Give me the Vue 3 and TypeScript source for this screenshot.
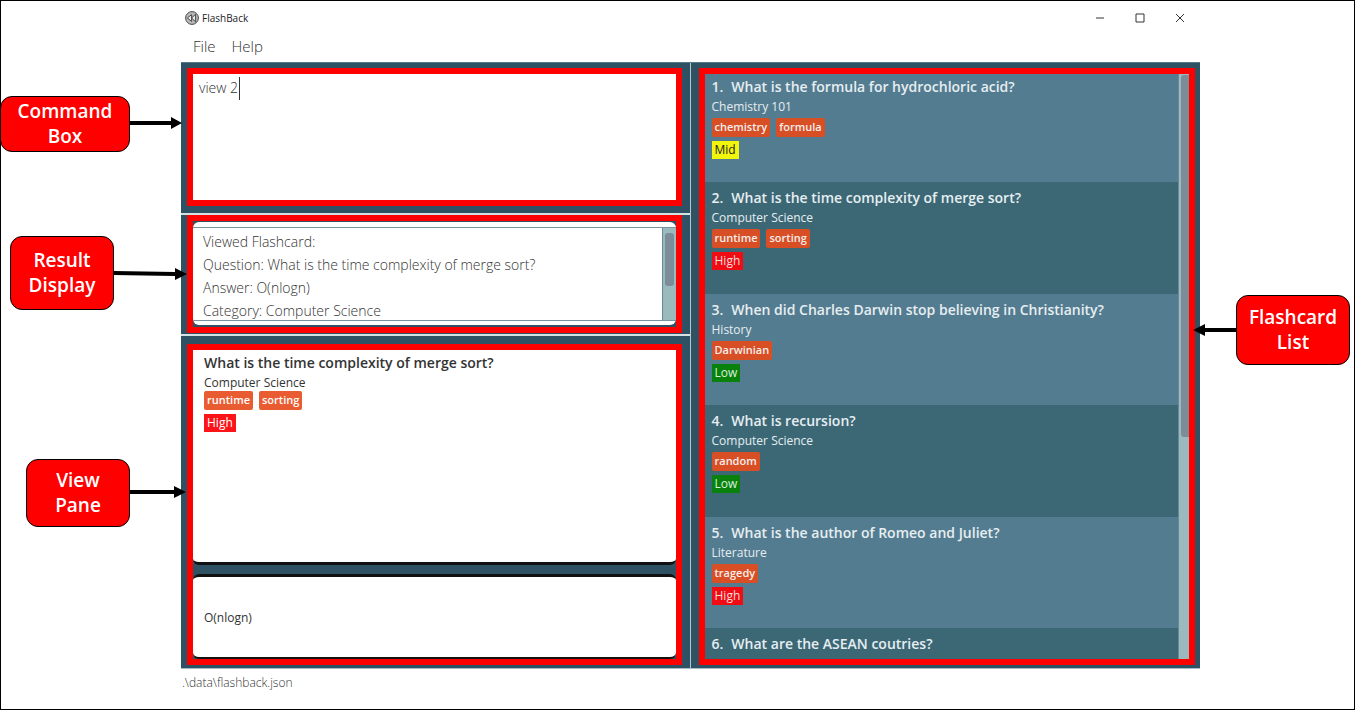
<script setup lang="ts">
import { ref } from 'vue'

type Priority = 'Low' | 'Mid' | 'High'

interface Flashcard {
  id: number
  question: string
  category: string
  tags: string[]
  priority?: Priority
}

const command = ref('view 2')

const result = [
  'Viewed Flashcard:',
  'Question: What is the time complexity of merge sort?',
  'Answer: O(nlogn)',
  'Category: Computer Science',
].join('\n')

const cards: Flashcard[] = [
  { id: 1, question: 'What is the formula for hydrochloric acid?', category: 'Chemistry 101', tags: ['chemistry', 'formula'], priority: 'Mid' },
  { id: 2, question: 'What is the time complexity of merge sort?', category: 'Computer Science', tags: ['runtime', 'sorting'], priority: 'High' },
  { id: 3, question: 'When did Charles Darwin stop believing in Christianity?', category: 'History', tags: ['Darwinian'], priority: 'Low' },
  { id: 4, question: 'What is recursion?', category: 'Computer Science', tags: ['random'], priority: 'Low' },
  { id: 5, question: 'What is the author of Romeo and Juliet?', category: 'Literature', tags: ['tragedy'], priority: 'High' },
  { id: 6, question: 'What are the ASEAN coutries?', category: '', tags: [] },
]

const viewed = cards[1]
</script>

<template>
  <div class="page">
    <main class="window">
      <header class="titlebar">
        <svg class="logo" viewBox="0 0 14 14" aria-hidden="true">
          <circle cx="7" cy="7" r="6.4" fill="#b9b9b9" stroke="#4a4a4a" stroke-width="1" />
          <path d="M6.6 3.6v6.8L2.4 7z M10.6 3.2v7.6L6.6 7z" fill="#e9e9e9" stroke="#3c3c3c" stroke-width="0.9" stroke-linejoin="round" />
        </svg>
        <h1>FlashBack</h1>
        <div class="controls">
          <button type="button" aria-label="Minimize">
            <svg viewBox="0 0 10 10"><path d="M1 5h8" /></svg>
          </button>
          <button type="button" aria-label="Maximize">
            <svg viewBox="0 0 10 10"><path d="M1 1h8v8H1z" /></svg>
          </button>
          <button type="button" aria-label="Close">
            <svg viewBox="0 0 10 10"><path d="M1 1l8 8M9 1l-8 8" /></svg>
          </button>
        </div>
      </header>

      <nav class="menu">
        <button type="button">File</button>
        <button type="button">Help</button>
      </nav>

      <div class="body">
        <div class="left">
          <section class="pane command-pane">
            <div class="frame command-frame">
              <textarea v-model="command" class="command" aria-label="Command box" spellcheck="false"></textarea>
              <span class="caret"></span>
            </div>
          </section>

          <section class="pane result-pane">
            <div class="frame result-frame">
              <div class="result-box">
                <textarea class="result" readonly rows="4" aria-label="Result display" :value="result"></textarea>
                <div class="track result-track"><div class="thumb result-thumb"></div></div>
              </div>
            </div>
          </section>

          <section class="pane view-pane">
            <div class="frame view-frame">
              <article class="question-box">
                <h2 class="question">{{ viewed.question }}</h2>
                <p class="category">{{ viewed.category }}</p>
                <div class="tags">
                  <span v-for="tag in viewed.tags" :key="tag" class="tag">{{ tag }}</span>
                </div>
                <span class="priority high">{{ viewed.priority }}</span>
              </article>
              <div class="answer-box">O(nlogn)</div>
            </div>
          </section>
        </div>

        <section class="right">
          <div class="frame list-frame">
            <ol class="list">
              <li v-for="card in cards" :key="card.id" class="card">
                <h2 class="question"><span class="number">{{ card.id }}.</span>{{ card.question }}</h2>
                <p class="category">{{ card.category }}</p>
                <div class="tags">
                  <span v-for="tag in card.tags" :key="tag" class="tag">{{ tag }}</span>
                </div>
                <span v-if="card.priority" class="priority" :class="card.priority.toLowerCase()">{{ card.priority }}</span>
              </li>
            </ol>
            <div class="track list-track"><div class="thumb list-thumb"></div></div>
          </div>
        </section>
      </div>

      <footer class="status">.\data\flashback.json</footer>
    </main>

    <div class="callout command-callout">Command<br />Box</div>
    <svg class="arrow command-arrow" viewBox="0 0 52 12" aria-hidden="true"><path d="M0 4h41V0l11 6-11 6V8H0z" /></svg>
    <div class="callout result-callout">Result<br />Display</div>
    <svg class="arrow result-arrow" viewBox="0 0 73 12" aria-hidden="true"><path d="M0 3l61 1V0l12 6-12 6V8L0 7z" /></svg>
    <div class="callout view-callout">View<br />Pane</div>
    <svg class="arrow view-arrow" viewBox="0 0 56 12" aria-hidden="true"><path d="M0 4h44V0l12 6-12 6V8H0z" /></svg>
    <div class="callout list-callout">Flashcard<br />List</div>
    <svg class="arrow list-arrow" viewBox="0 0 44 12" aria-hidden="true"><path d="M44 4H12V0L0 6l12 6V8h32z" /></svg>
  </div>
</template>

<style>
body {
  margin: 0;
}
</style>

<style scoped>
* {
  box-sizing: border-box;
}

.page {
  position: relative;
  height: 100vh;
  min-height: 480px;
  padding: 0 154px 0 180px;
  border: 1px solid #000;
  overflow: hidden;
  background: #fff;
  color: #333;
  font-family: "Open Sans", "Noto Sans", sans-serif;
  font-size: 12px;
}

h1,
h2,
p,
ol {
  margin: 0;
  padding: 0;
  font-weight: 400;
}

button,
textarea {
  margin: 0;
  border: 0;
  padding: 0;
  background: none;
  color: inherit;
  font: inherit;
}

.window {
  display: flex;
  flex-direction: column;
  height: 100%;
}

.titlebar {
  display: flex;
  align-items: center;
  gap: 3px;
  height: 33px;
  padding: 0 14px 0 4px;
}

.logo {
  width: 14px;
  height: 14px;
}

.titlebar h1 {
  font-size: 10px;
  color: #222;
}

.controls {
  display: flex;
  gap: 28px;
  margin-left: auto;
}

.controls button {
  display: flex;
  width: 12px;
  height: 12px;
  align-items: center;
  justify-content: center;
}

.controls svg {
  width: 10px;
  height: 10px;
  fill: none;
  stroke: #333;
  stroke-width: 1;
}

.menu {
  display: flex;
  gap: 16px;
  height: 28px;
  padding: 0 12px 5px;
  font-size: 15px;
  font-weight: 300;
}

.body {
  display: grid;
  grid-template-columns: minmax(0, 1fr) minmax(0, 1fr);
  grid-template-rows: minmax(0, 1fr);
  flex: 1;
  min-height: 0;
  border-top: 1px solid #587988;
  border-bottom: 1px solid #a9bac2;
  background: #2f5164;
}

.left {
  display: flex;
  flex-direction: column;
  border-right: 1px solid #b8c9ce;
}

.right {
  padding: 5px 5px 3px 8px;
}

.pane {
  padding: 0 8px 0 6px;
}

.frame {
  height: 100%;
  border: 6px solid #f00;
}

.command-pane {
  height: 152px;
  padding-top: 5px;
  padding-bottom: 7px;
  border-bottom: 2px solid #d5e2e4;
}

.command-frame {
  position: relative;
  background: #fff;
}

.command {
  display: block;
  width: 100%;
  height: 100%;
  padding: 4px 6px;
  outline: 0;
  resize: none;
  font-size: 14px;
  font-weight: 300;
  line-height: 20px;
}

.caret {
  position: absolute;
  top: 3px;
  left: 46px;
  width: 1px;
  height: 23px;
  background: #333;
}

.result-pane {
  height: 121px;
  padding-bottom: 1px;
  border-bottom: 2px solid #d5e2e4;
}

.result-frame {
  padding: 1px 0 2px;
  background: #2f5164;
}

.result-box {
  display: flex;
  height: 100%;
  border: solid #fff;
  border-width: 5px 0 4px;
  border-radius: 6px;
  background: #fff;
}

.result {
  flex: 1;
  min-width: 0;
  padding: 2px 10px 0;
  border: solid #7994a1;
  border-width: 1px 0;
  overflow: hidden;
  outline: 0;
  resize: none;
  white-space: pre;
  font-size: 14px;
  font-weight: 300;
  line-height: 23px;
}

.track {
  background: #9bbabd;
  border-left: 1px solid #668b97;
}

.thumb {
  border-radius: 3px;
  background: #7c8d99;
}

.result-track {
  width: 14px;
  padding: 5px 2px;
  border-top: 1px solid #7994a1;
  border-bottom: 1px solid #7994a1;
}

.result-thumb {
  height: 53px;
}

.view-pane {
  flex: 1;
  min-height: 0;
  padding-top: 8px;
  padding-bottom: 3px;
}

.view-frame {
  display: flex;
  flex-direction: column;
  gap: 9px;
}

.question-box {
  flex: 1;
  min-height: 0;
  padding: 3px 11px;
  border-bottom: 3px solid #111;
  border-radius: 0 0 6px 6px;
  background: #fff;
}

.answer-box {
  display: flex;
  height: 85px;
  align-items: center;
  padding: 0 11px;
  border-top: 3px solid #111;
  border-bottom: 2px solid #111;
  border-radius: 6px;
  background: #fff;
}

.question {
  font-size: 14px;
  font-weight: 600;
  line-height: 20px;
  white-space: nowrap;
}

.number {
  margin-right: 8px;
}

.category {
  height: 18px;
  font-size: 12px;
  line-height: 20px;
}

.tags {
  display: flex;
  gap: 6px;
  height: 19px;
  margin-bottom: 4px;
}

.tag {
  padding: 0 3px;
  border-radius: 2px;
  background: #e95b30;
  color: #fff;
  font-size: 11px;
  font-weight: 600;
  line-height: 18px;
}

.priority {
  display: inline-block;
  height: 18px;
  padding: 0 3px;
  font-size: 12px;
  line-height: 18px;
  vertical-align: top;
}

.high {
  background: #fc1419;
  color: #fff;
}

.list-frame {
  display: flex;
  overflow: hidden;
}

.list {
  flex: 1;
  min-width: 0;
  margin-top: -3px;
  list-style: none;
}

.card {
  height: 111px;
  padding: 6px 7px;
  background: #547c90;
  color: #e6eef1;
}

.card:nth-child(even) {
  height: 112px;
  background: #3c6876;
}

.card .category {
  height: 21px;
}

.card .tag {
  background: #d84f26;
  color: #f5eeeb;
}

.card .high {
  background: #f00c12;
  color: #f5dcdc;
}

.card .mid {
  background: #f2f50c;
  color: #222;
}

.card .low {
  background: #08820c;
  color: #dcefdc;
}

.list-track {
  width: 11px;
  padding: 1px 0 0 2px;
}

.list-thumb {
  height: 362px;
  border-radius: 3px 0 0 3px;
}

.status {
  height: 40px;
  padding: 5px 1px;
  font-size: 12px;
  font-weight: 300;
  line-height: 18px;
}

.callout {
  position: absolute;
  display: flex;
  align-items: center;
  justify-content: center;
  border: 1px solid #000;
  border-radius: 12px;
  background: #f00;
  color: #fff;
  font-size: 19px;
  font-weight: 600;
  line-height: 25px;
  text-align: center;
}

.command-callout {
  top: 95px;
  left: -1px;
  width: 130px;
  height: 56px;
}

.result-callout {
  top: 235px;
  left: 9px;
  width: 104px;
  height: 74px;
}

.view-callout {
  top: 458px;
  left: 25px;
  width: 104px;
  height: 68px;
}

.list-callout {
  top: 294px;
  right: 4px;
  width: 114px;
  height: 70px;
}

.arrow {
  position: absolute;
  height: 12px;
}

.command-arrow {
  top: 116px;
  left: 129px;
  width: 52px;
}

.result-arrow {
  top: 267px;
  left: 113px;
  width: 73px;
}

.view-arrow {
  top: 485px;
  left: 129px;
  width: 56px;
}

.list-arrow {
  top: 323px;
  right: 117px;
  width: 44px;
}
</style>
